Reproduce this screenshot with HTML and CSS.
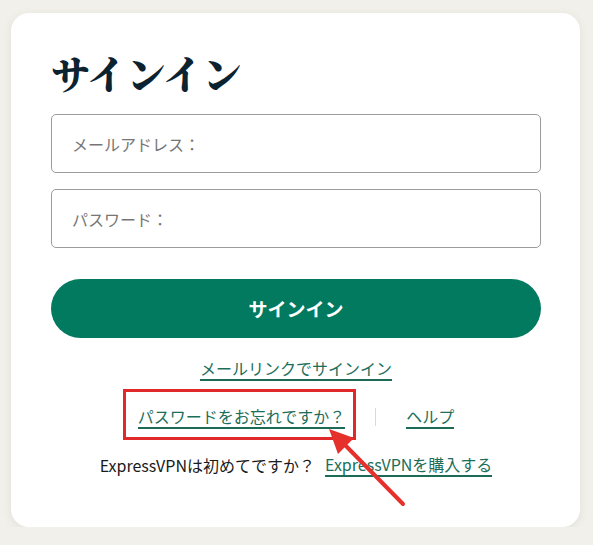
FILE: index.html
```
<!DOCTYPE html>
<html lang="ja">
  <head>
    <meta charset="UTF-8" />
    <meta name="viewport" content="width=device-width, initial-scale=1.0" />
    <title>サインイン</title>
    <link rel="stylesheet" href="styles.css">
  </head>
  <body>
    <div class="card">
      <h1 class="title">サインイン</h1>
      <form class="form">
        <input class="field" type="email" placeholder="メールアドレス：" />
        <input class="field" type="password" placeholder="パスワード：" />
        <button class="submit" type="button">サインイン</button>
      </form>
      <div class="links">
        <div class="row">
          <a class="link" href="#mail">メールリンクでサインイン</a>
        </div>
        <div class="row row-split">
          <a class="link forgot" href="#forgot">パスワードをお忘れですか？<span class="mark"></span></a>
          <span class="sep"></span>
          <a class="link" href="#help">ヘルプ</a>
        </div>
        <div class="row row-new">
          <span class="note">ExpressVPNは初めてですか？</span>
          <a class="link" href="#buy">ExpressVPNを購入する</a>
        </div>
      </div>
      <svg class="arrow" width="569" height="514" viewBox="0 0 569 514">
        <line x1="392" y1="491" x2="334" y2="432" stroke="#e5302b" stroke-width="4" stroke-linecap="round" />
        <polygon points="318,416 343,425 327,441" fill="#e5302b" />
      </svg>
    </div>
  </body>
</html>
```

FILE: styles.css
```
* {
  margin: 0;
  padding: 0;
  box-sizing: border-box;
}
body {
  background-color: #f1f0ea;
  font-family: "Noto Sans CJK JP", "Noto Sans", sans-serif;
  color: #1a1a1a;
}
.card {
  position: relative;
  width: 569px;
  height: 514px;
  margin: 13px 0 0 11px;
  padding: 36px 39px 0 40px;
  background-color: #fff;
  border-radius: 18px;
  box-shadow: 0 2px 10px rgba(120, 115, 95, 0.12);
}
.title {
  font-family: "Noto Serif CJK JP", "Noto Sans CJK JP", serif;
  font-size: 39px;
  font-weight: 900;
  line-height: 46px;
  color: #0b2231;
  margin-bottom: 19px;
}
.form {
  display: flex;
  flex-direction: column;
}
.field {
  height: 59px;
  margin-bottom: 16px;
  padding: 0 20px;
  border: 1px solid #9c9c9c;
  border-radius: 5px;
  font-family: inherit;
  font-size: 16px;
  color: #1a1a1a;
  outline: none;
}
.field::placeholder {
  color: #767676;
}
.form .field:nth-child(2) {
  margin-bottom: 31px;
}
.submit {
  height: 59px;
  border: none;
  border-radius: 30px;
  background-color: #027a5f;
  color: #fff;
  font-family: inherit;
  font-size: 19px;
  font-weight: 700;
  cursor: pointer;
}
.links {
  display: flex;
  flex-direction: column;
  gap: 24px;
  margin-top: 19px;
}
.row {
  display: flex;
  justify-content: center;
  align-items: center;
}
.row-split {
  gap: 30px;
}
.row-new {
  gap: 10px;
}
.link {
  position: relative;
  display: inline-block;
  font-size: 16px;
  line-height: 22px;
  color: #1c6e5a;
  text-decoration: none;
  border-bottom: 2px solid #1c6b57;
}
.note {
  font-size: 16px;
  line-height: 22px;
  color: #1a1a1a;
}
.sep {
  width: 1px;
  height: 18px;
  background-color: #d9d9d9;
}
.mark {
  position: absolute;
  top: -16px;
  left: -15px;
  right: -11px;
  bottom: -13px;
  border: 3px solid #e0292b;
}
.arrow {
  position: absolute;
  top: 0;
  left: 0;
  pointer-events: none;
}
```
